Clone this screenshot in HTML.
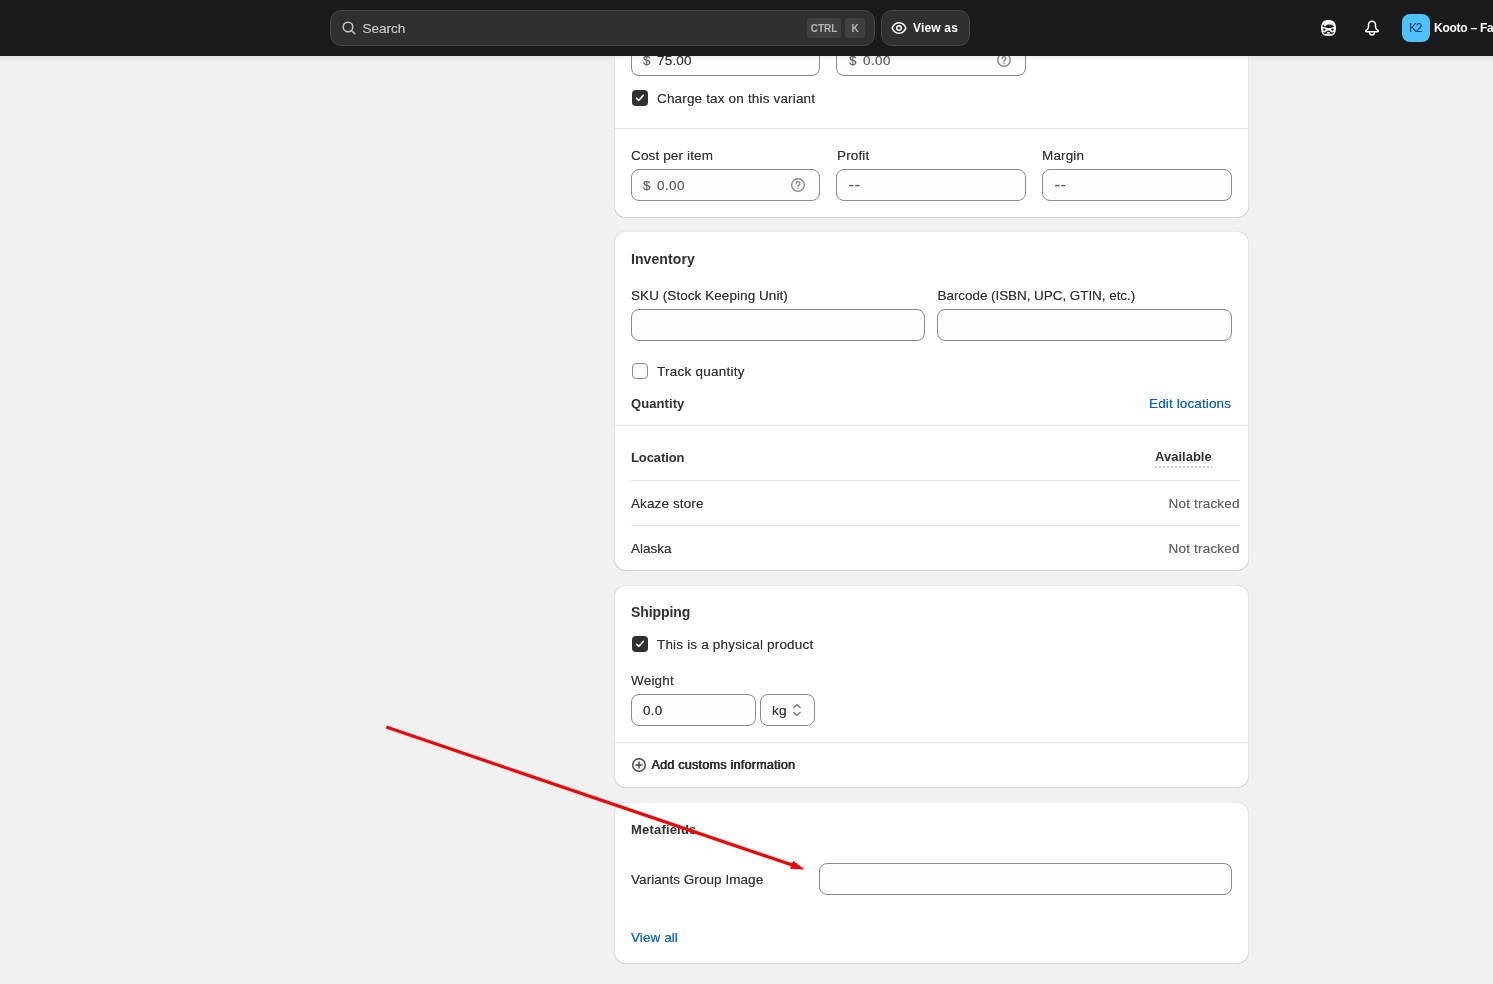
<!DOCTYPE html>
<html lang="en">
<head>
<meta charset="utf-8">
<title>Variant</title>
<style>
*{box-sizing:border-box;margin:0;padding:0}
html,body{width:1493px;height:984px;overflow:hidden;background:#f1f1f1}
body{font-family:"Liberation Sans",sans-serif;font-size:13px;color:#303030;position:relative}
.abs,.t,.card,.inp,.hr,.cb{position:absolute}
.t{white-space:nowrap;line-height:16px;height:16px;font-size:13.5px;text-shadow:0 0 0 color-mix(in srgb,currentColor 55%,transparent)}
.b{font-weight:700;font-size:13px;text-shadow:none}
.sb{font-weight:400;-webkit-text-stroke:.85px currentColor}
.sub{color:#616161}
.link{color:#005bd3}
#root{position:absolute;left:0;top:0;width:1493px;height:984px;overflow:hidden;will-change:transform}
#top{position:absolute;left:0;top:0;width:1493px;height:56px;background:#1a1a1a}
.card{left:614px;width:635px;background:#fff;border-radius:12px;
 box-shadow:inset 1px 0 0 0 rgba(0,0,0,.10), inset -1px 0 0 0 rgba(0,0,0,.10), inset 0 -1px 0 0 rgba(0,0,0,.17), inset 0 1px 0 0 rgba(0,0,0,.07)}
.inp{height:32px;border:1px solid #8a8a8a;border-radius:8px;background:#fdfdfd}
.hr{height:1px;background:#e3e3e3}
.cb{width:16px;height:16px;border-radius:4px}
.cb.on{background:#303030}
.cb.off{border:1px solid #8a8a8a;background:#fdfdfd}
.cb svg{position:absolute;left:0;top:0}
.pill{position:absolute;top:10px;height:36px;background:#303030;border:1px solid #474747;border-radius:11px}
.kbd{position:absolute;top:18px;height:20px;background:#404040;border-radius:4px;color:#b5b5b5;font-size:10px;font-weight:700;line-height:21px;text-align:center}
#chg{letter-spacing:0.166px}
#cpi{letter-spacing:0.143px}
#sku{letter-spacing:0.064px}
#bar{letter-spacing:-0.062px}
#trk{letter-spacing:0.246px}
#qty{letter-spacing:0.080px}
#edl{letter-spacing:0.131px}
#loc{letter-spacing:-0.096px}
#akz{letter-spacing:0.110px}
#nt1{letter-spacing:0.197px}
#nt2{letter-spacing:0.197px}
#shp{letter-spacing:-0.070px}
#inv{letter-spacing:0.086px}
#phy{letter-spacing:0.185px}
#wgt{letter-spacing:0.204px}
#aci{letter-spacing:.27px}
#mtf{letter-spacing:0.190px}
#vgi{letter-spacing:0.059px}
#val{letter-spacing:0.074px}
#vas{letter-spacing:0.180px}
#k2{letter-spacing:-1.200px}
#p1v{letter-spacing:0.190px}
#p2v{letter-spacing:0.400px}
#c0v{letter-spacing:0.400px}
#prf{letter-spacing:0.150px}
#mrg{letter-spacing:0.150px}
#w00{letter-spacing:0.300px}
#kg{letter-spacing:0.200px}
#avl{letter-spacing:0.011px}
#kto{letter-spacing:-0.250px}
</style>
</head>
<body>
<div id="root">

<!-- ===== cards ===== -->
<div class="card" id="c1" style="top:20px;height:198px"></div>
<div class="card" id="c2" style="top:231px;height:340px"></div>
<div class="card" id="c3" style="top:585px;height:203px"></div>
<div class="card" id="c4" style="top:802px;height:162px"></div>

<!-- ===== card 1: pricing ===== -->
<div class="inp" style="left:631px;top:44px;width:189px"></div>
<div class="t" style="left:643px;top:53px" id="p1d"><span class="sub">$</span></div>
<div class="t" style="left:657px;top:53px" id="p1v">75.00</div>
<div class="inp" style="left:836px;top:44px;width:190px"></div>
<div class="t sub" style="left:849px;top:53px">$</div>
<div class="t sub" style="left:863px;top:53px" id="p2v">0.00</div>
<svg class="abs" style="left:996px;top:51.500px" width="16" height="16" viewBox="0 0 16 16" fill="none" stroke="#8a8a8a" stroke-width="1.4"><circle cx="8" cy="8" r="6.3"/><path d="M6.2 6.6a1.8 1.8 0 1 1 2.6 1.6c-.5.3-.8.6-.8 1.1" stroke-linecap="round"/><circle cx="8" cy="11.200" r=".8" fill="#8a8a8a" stroke="none"/></svg>

<div class="cb on" style="left:632px;top:90px"><svg width="16" height="16" viewBox="0 0 16 16"><path d="M4.600 8.300L6.700 10.400L11.200 5.400" fill="none" stroke="#fff" stroke-width="1.550" stroke-linecap="round" stroke-linejoin="round"/></svg></div>
<div class="t" style="left:657px;top:91px" id="chg">Charge tax on this variant</div>

<div class="hr" style="left:615px;top:128px;width:633px"></div>

<div class="t" style="left:631px;top:148px" id="cpi">Cost per item</div>
<div class="t" style="left:837px;top:148px" id="prf">Profit</div>
<div class="t" style="left:1042px;top:148px" id="mrg">Margin</div>
<div class="inp" style="left:631px;top:169px;width:189px"></div>
<div class="inp" style="left:836px;top:169px;width:190px"></div>
<div class="inp" style="left:1042px;top:169px;width:190px"></div>
<div class="t sub" style="left:643px;top:178px">$</div>
<div class="t sub" style="left:657px;top:178px" id="c0v">0.00</div>
<svg class="abs" style="left:790px;top:177px" width="16" height="16" viewBox="0 0 16 16" fill="none" stroke="#8a8a8a" stroke-width="1.4"><circle cx="8" cy="8" r="6.3"/><path d="M6.2 6.6a1.8 1.8 0 1 1 2.6 1.6c-.5.3-.8.6-.8 1.1" stroke-linecap="round"/><circle cx="8" cy="11.200" r=".8" fill="#8a8a8a" stroke="none"/></svg>
<div class="t sub" style="left:848.500px;top:177px;font-size:17px;letter-spacing:.4px" id="d1">--</div>
<div class="t sub" style="left:1054.500px;top:177px;font-size:17px;letter-spacing:.4px" id="d2">--</div>

<!-- ===== card 2: inventory ===== -->
<div class="t b" style="left:631px;top:250px;font-size:14px;line-height:18px;height:18px" id="inv">Inventory</div>
<div class="t" style="left:631px;top:288px" id="sku">SKU (Stock Keeping Unit)</div>
<div class="t" style="left:937.5px;top:288px" id="bar">Barcode (ISBN, UPC, GTIN, etc.)</div>
<div class="inp" style="left:631px;top:309px;width:294px"></div>
<div class="inp" style="left:937px;top:309px;width:295px"></div>
<div class="cb off" style="left:632px;top:363px"></div>
<div class="t" style="left:657px;top:364px" id="trk">Track quantity</div>
<div class="t b" style="left:631px;top:396px" id="qty">Quantity</div>
<div class="t link" style="left:1149px;top:396px" id="edl">Edit locations</div>
<div class="hr" style="left:615px;top:425px;width:633px"></div>
<div class="t b" style="left:631px;top:450px" id="loc">Location</div>
<div class="t b" style="left:1155px;top:449px" id="avl">Available</div>
<div class="abs" style="left:1155px;top:466px;width:57px;height:2px;background-image:repeating-linear-gradient(90deg,#cccccc 0 2px,transparent 2px 4px)"></div>
<div class="hr" style="left:631px;top:480px;width:609px"></div>
<div class="t" style="left:631px;top:496px" id="akz">Akaze store</div>
<div class="t sub" style="left:1168.5px;top:496px" id="nt1">Not tracked</div>
<div class="hr" style="left:631px;top:525px;width:609px"></div>
<div class="t" style="left:631px;top:541px" id="alk">Alaska</div>
<div class="t sub" style="left:1168.5px;top:541px" id="nt2">Not tracked</div>

<!-- ===== card 3: shipping ===== -->
<div class="t b" style="left:631px;top:603px;font-size:14px;line-height:18px;height:18px" id="shp">Shipping</div>
<div class="cb on" style="left:632px;top:636px"><svg width="16" height="16" viewBox="0 0 16 16"><path d="M4.600 8.300L6.700 10.400L11.200 5.400" fill="none" stroke="#fff" stroke-width="1.550" stroke-linecap="round" stroke-linejoin="round"/></svg></div>
<div class="t" style="left:657px;top:637px" id="phy">This is a physical product</div>
<div class="t" style="left:631px;top:673px" id="wgt">Weight</div>
<div class="inp" style="left:631px;top:694px;width:125px"></div>
<div class="t" style="left:643px;top:703px" id="w00">0.0</div>
<div class="inp" style="left:760px;top:694px;width:55px"></div>
<div class="t" style="left:772px;top:703px" id="kg">kg</div>
<svg class="abs" style="left:787px;top:700px" width="20" height="20" viewBox="0 0 20 20" fill="#7a7a7a"><path d="M10.884 4.323a1.250 1.250 0 0 0-1.768 0l-2.646 2.647a.750.750 0 0 0 1.060 1.060l2.470-2.470 2.470 2.470a.750.750 0 1 0 1.060-1.060l-2.646-2.647Z"/><path d="M13.530 11.970a.750.750 0 0 1 0 1.060l-2.646 2.647a1.250 1.250 0 0 1-1.768 0l-2.646-2.647a.750.750 0 1 1 1.060-1.060l2.470 2.470 2.470-2.470a.750.750 0 0 1 1.060 0Z"/></svg>
<div class="hr" style="left:615px;top:742px;width:633px"></div>
<svg class="abs" style="left:629px;top:755px" width="20" height="20" viewBox="0 0 20 20" fill="#4a4a4a"><path d="M6.250 10a.750.750 0 0 1 .750-.750h2.250v-2.250a.750.750 0 0 1 1.500 0v2.250h2.250a.750.750 0 0 1 0 1.500h-2.250v2.250a.750.750 0 0 1-1.500 0v-2.250h-2.250a.750.750 0 0 1-.750-.750Z"/><path fill-rule="evenodd" d="M10 17a7 7 0 1 0 0-14 7 7 0 0 0 0 14Zm0-1.500a5.500 5.500 0 1 0 0-11 5.500 5.500 0 0 0 0 11Z"/></svg>
<div class="t" style="left:651.500px;top:757px;font-size:12.500px;text-shadow:.45px 0 0 #303030,-.2px 0 0 #303030" id="aci">Add customs information</div>

<!-- ===== card 4: metafields ===== -->
<div class="t b" style="left:631px;top:822px" id="mtf">Metafields</div>
<div class="t" style="left:631px;top:872px" id="vgi">Variants Group Image</div>
<div class="inp" style="left:819px;top:863px;width:413px"></div>
<div class="t link" style="left:631px;top:930px" id="val">View all</div>

<!-- ===== red arrow ===== -->
<svg class="abs" style="left:0;top:0" width="1493" height="984" viewBox="0 0 1493 984">
 <line x1="386.300" y1="727.100" x2="793" y2="865.300" stroke="#ec0808" stroke-width="3.200"/>
 <polygon points="804.800,869.600 793.100,860.800 790,868.800" fill="#f40000"/>
</svg>

<div class="abs" style="left:0;top:56px;width:1493px;height:5px;background:linear-gradient(rgba(0,0,0,.06),rgba(0,0,0,0))"></div>
<!-- ===== top bar ===== -->
<div id="top">
 <div class="pill" style="left:330px;width:545px"></div>
 <svg class="abs" style="left:339px;top:18px" width="20" height="20" viewBox="0 0 20 20" fill="#c4c4c4"><path fill-rule="evenodd" d="M12.323 13.383a5.500 5.500 0 1 1 1.060-1.060l2.897 2.897a.750.750 0 1 1-1.060 1.060l-2.897-2.897Zm.677-4.383a4 4 0 1 1-8 0 4 4 0 0 1 8 0Z"/></svg>
 <div class="t" style="left:362.500px;top:21px;color:#c6c6c6;font-size:13.5px" id="srch">Search</div>
 <div class="kbd" style="left:807px;width:34px">CTRL</div>
 <div class="kbd" style="left:845px;width:20px">K</div>
 <div class="pill" style="left:881px;width:89px"></div>
 <svg class="abs" style="left:889px;top:18px" width="20" height="20" viewBox="0 0 20 20" fill="#fff"><path fill-rule="evenodd" d="M13 10a3 3 0 1 1-6 0 3 3 0 0 1 6 0Zm-1.500 0a1.500 1.500 0 1 0-3 0 1.500 1.500 0 0 0 3 0Z"/><path fill-rule="evenodd" d="M10 4c-2.476 0-4.348 1.230-5.577 2.532a9.266 9.266 0 0 0-1.400 1.922 5.980 5.980 0 0 0-.370.818c-.082.227-.153.488-.153.728s.071.501.152.728c.088.246.213.524.371.818.317.587.784 1.270 1.400 1.922 1.229 1.302 3.100 2.532 5.577 2.532 2.476 0 4.348-1.230 5.577-2.532a9.265 9.265 0 0 0 1.400-1.922c.158-.294.283-.572.370-.818.082-.227.153-.488.153-.728s-.071-.501-.152-.728a5.987 5.987 0 0 0-.371-.818 9.269 9.269 0 0 0-1.400-1.922c-1.229-1.302-3.100-2.532-5.577-2.532Zm-5.999 6.002v-.004c.004-.020.017-.090.064-.223.058-.161.150-.369.278-.608a7.760 7.760 0 0 1 1.170-1.605c1.042-1.104 2.545-2.062 4.487-2.062 1.942 0 3.445.958 4.486 2.062a7.770 7.770 0 0 1 1.170 1.605c.130.240.221.447.279.608.047.132.060.203.064.223v.004c-.004.020-.017.090-.064.223-.058.161-.150.369-.279.608a7.770 7.770 0 0 1-1.170 1.605c-1.041 1.104-2.544 2.062-4.486 2.062-1.942 0-3.445-.958-4.486-2.062a7.760 7.760 0 0 1-1.170-1.605 4.460 4.460 0 0 1-.279-.608c-.047-.132-.060-.203-.064-.223Z"/></svg>
 <div class="t b" style="left:913px;top:20px;color:#fff;font-size:12px" id="vas">View as</div>

 <!-- sidekick face -->
 <svg class="abs" style="left:1320.600px;top:19.600px" width="15" height="16.300" viewBox="0 0 15 16.300">
  <defs><linearGradient id="fg" x1="0" y1="0" x2="0" y2="1"><stop offset="0" stop-color="#fff"/><stop offset=".7" stop-color="#f4f4f4"/><stop offset="1" stop-color="#cfcfcf"/></linearGradient></defs>
  <path d="M7.500 0c5 0 7.500 2.500 7.500 8.150s-2.500 8.150-7.500 8.150S0 13.800 0 8.150 2.500 0 7.500 0Z" fill="url(#fg)"/>
  <path d="M1.500 6.800C1.400 5.800 1.800 4.700 2.500 4.200C2.800 4.800 3.100 5.400 3.400 6.100C3.600 6.500 4 6.500 4.300 6.200C5.100 5.300 6.300 4.700 7.700 4.500C9.500 4.200 11.300 4.600 12.400 5.800C12.700 6.100 12.900 6.500 13 6.900C12.200 6.900 11.500 7.100 10.800 7.400C9.800 7.900 8.600 8.100 7.400 7.900C6.300 7.800 5.400 7.600 4.500 7.400C3.500 7.200 2.500 7 1.500 6.800Z" fill="#1a1a1a"/>
  <circle cx="3.200" cy="9.600" r="1.200" fill="#1a1a1a"/><circle cx="11.400" cy="9.600" r="1.200" fill="#1a1a1a"/>
  <path d="M7.400 10.600C6.300 10.600 5.700 11.400 4.700 11.900C3.800 12.400 2.700 12.600 1.700 12.500C2.300 13.400 3.600 13.900 5 13.700C5.900 13.600 6.700 13.400 7.400 13.400C8.100 13.400 8.900 13.600 9.800 13.700C11.200 13.900 12.500 13.400 13.100 12.500C12.100 12.600 11 12.400 10.100 11.900C9.100 11.400 8.500 10.600 7.400 10.600Z" fill="#1a1a1a"/>
  <ellipse cx="7.400" cy="12.700" rx="1.700" ry=".6" fill="#fff"/>
 </svg>
 <!-- bell -->
 <svg class="abs" style="left:1362px;top:18px" width="20" height="20" viewBox="0 0 20 20" fill="none" stroke="#fff" stroke-width="1.500" stroke-linejoin="round" stroke-linecap="round"><path d="M10 3.350a3.500 3.500 0 0 0-3.500 3.500v1.700c0 1.300-.400 2.200-1.200 2.900l-1.300 1.100c-.550.450-.250 1.100.400 1.100h11.200c.650 0 .950-.650.400-1.100l-1.300-1.100c-.800-.700-1.200-1.600-1.200-2.900v-1.700a3.500 3.500 0 0 0-3.500-3.500Z"/><path d="M7.700 14.700a2.300 2.300 0 0 0 4.600 0"/></svg>
 <div class="abs" style="left:1402px;top:14px;width:28px;height:28px;border-radius:8px;background:#4fc1fb"></div>
 <div class="t" style="left:1409px;top:20px;color:#0b4873;font-size:12px" id="k2">K2</div>
 <div class="t b" style="left:1434px;top:20px;color:#fff;font-size:12px" id="kto">Kooto – Fashion</div>
</div>

</div>
</body>
</html>
